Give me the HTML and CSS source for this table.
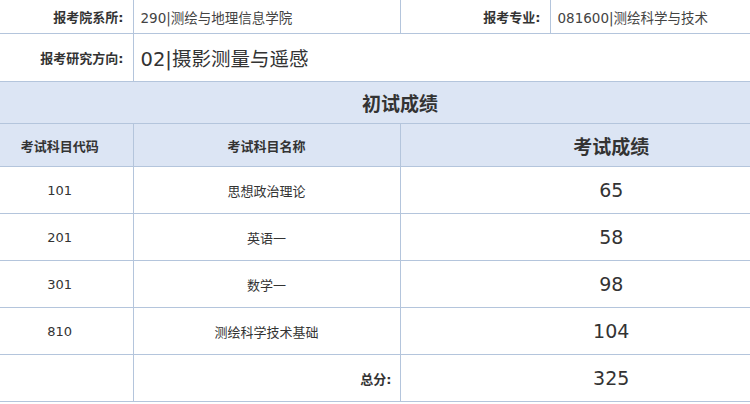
FILE: index.html
```html
<!DOCTYPE html>
<html lang="zh-CN">
<head>
<meta charset="utf-8">
<title>初试成绩</title>
<link rel="stylesheet" href="styles.css">
</head>
<body>
<table class="grid">
  <colgroup>
    <col class="c1"><col class="c2"><col class="c3"><col class="c4">
  </colgroup>
  <tr class="r-top">
    <td class="label">报考院系所:</td>
    <td class="value">290|测绘与地理信息学院</td>
    <td class="label">报考专业:</td>
    <td class="value">081600|测绘科学与技术</td>
  </tr>
  <tr class="r-dir">
    <td class="label">报考研究方向:</td>
    <td class="value big" colspan="3">02|摄影测量与遥感</td>
  </tr>
  <tr class="r-title">
    <td class="title" colspan="4">初试成绩</td>
  </tr>
  <tr class="r-head">
    <td class="head code">考试科目代码</td>
    <td class="head name">考试科目名称</td>
    <td class="head score" colspan="2">考试成绩</td>
  </tr>
  <tr class="r-data">
    <td class="code">101</td>
    <td class="name">思想政治理论</td>
    <td class="score" colspan="2">65</td>
  </tr>
  <tr class="r-data">
    <td class="code">201</td>
    <td class="name">英语一</td>
    <td class="score" colspan="2">58</td>
  </tr>
  <tr class="r-data">
    <td class="code">301</td>
    <td class="name">数学一</td>
    <td class="score" colspan="2">98</td>
  </tr>
  <tr class="r-data">
    <td class="code">810</td>
    <td class="name">测绘科学技术基础</td>
    <td class="score" colspan="2">104</td>
  </tr>
  <tr class="r-data">
    <td class="code"></td>
    <td class="total">总分:</td>
    <td class="score" colspan="2">325</td>
  </tr>
</table>
</body>
</html>
```
FILE: styles.css
```css
html, body {
  margin: 0;
  padding: 0;
  background: #ffffff;
  overflow: hidden;
}
body {
  font-family: "DejaVu Sans", "Noto Sans CJK SC", sans-serif;
  color: #333333;
}
.grid {
  border-collapse: collapse;
  table-layout: fixed;
  width: 750px;
}
.c1 { width: 133px; }
.c2 { width: 267px; }
.c3 { width: 150px; }
.c4 { width: 200px; }
.grid td {
  border: 1px solid #b4c5dc;
  padding: 0;
  vertical-align: middle;
}
.grid tr > td:first-child { border-left: none; }
.grid tr > td:last-child { border-right: none; }
.r-top td { border-top: none; height: 33px; }
.r-dir td { height: 47px; }
.r-title td { height: 41px; }
.r-head td { height: 42px; }
.r-data td { height: 46px; }

.label {
  text-align: right;
  padding-right: 9px !important;
  font-size: 13px;
  font-weight: bold;
  color: #333333;
}
.value {
  text-align: left;
  padding-left: 7px !important;
  font-size: 13.5px;
  color: #444444;
}
.value.big {
  font-size: 19.5px;
  color: #333333;
}
.r-title td, .r-head td {
  background: #dce5f4;
}
.title {
  text-align: center;
  padding-left: 50px !important;
  font-size: 19px;
  font-weight: bold;
  color: #333333;
}
.head {
  font-size: 13px;
  font-weight: bold;
  color: #333333;
}
.head.score {
  font-size: 19px;
}
.code {
  text-align: center;
  padding-right: 13px !important;
  font-size: 13px;
}
.name {
  text-align: center;
  font-size: 13px;
}
.score {
  text-align: center;
  padding-left: 72px !important;
  font-size: 19px;
}
.total {
  text-align: right;
  padding-right: 8px !important;
  font-size: 13px;
  font-weight: bold;
}
```
